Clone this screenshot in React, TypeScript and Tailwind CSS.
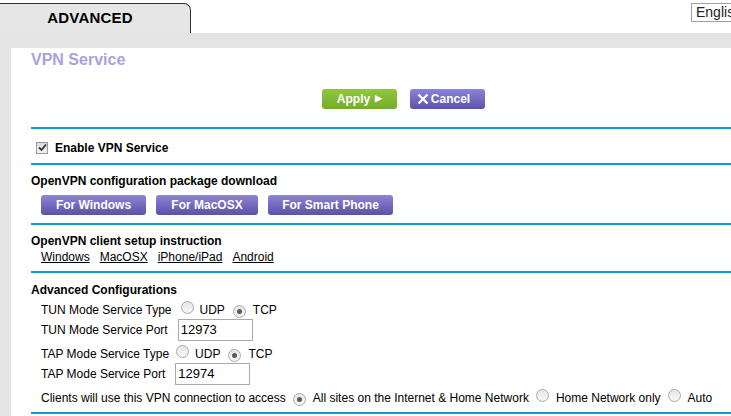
const Radio = ({ checked = false }: { checked?: boolean }) => (
  <span className="inline-flex items-center justify-center w-[13px] h-[13px] rounded-full border border-[#a9a9a9] bg-gradient-to-b from-[#e6e6e6] to-[#f7f7f7] shrink-0">
    {checked && <span className="w-[5px] h-[5px] rounded-full bg-[#5a5a5a]" />}
  </span>
);

const Line = () => <div className="h-[2px] bg-[#0d9ccf] w-full" />;

const PurpleButton = ({ label, width }: { label: string; width: string }) => (
  <button
    className={`h-[20px] rounded-[3px] bg-gradient-to-b from-[#8e84da] to-[#5b52a6] text-white font-bold text-[12px] leading-none ${width}`}
  >
    {label}
  </button>
);

export default function App() {
  return (
    <div className="w-[731px] h-[416px] overflow-hidden bg-white text-[12px] text-black font-['Liberation_Sans',Arial,sans-serif]">
      {/* Top: tab + language */}
      <div className="flex items-start h-[33px] pt-[3px]">
        <div className="w-[191px] h-[30px] bg-[#e6e6e6] border-t border-r border-[#333] rounded-tr-[7px] flex items-center justify-center pr-[10px]">
          <span className="font-bold text-[15px] tracking-[0.2px]">ADVANCED</span>
        </div>
        <div className="ml-auto mr-[-30px] h-[19px] w-[70px] border border-[#a0a0a0] px-[4px] flex items-center text-[14px] text-[#222]">
          English
        </div>
      </div>
      <div className="h-[15px] bg-[#e4e4e4]" />

      <div className="flex h-[368px]">
        <div className="w-[11px] bg-[#e4e4e4] shrink-0" />
        <div className="flex-1 pl-[20px] overflow-hidden">
          <div className="h-[20px] flex items-end">
            <h1 className="font-bold text-[16px] text-[#a9a3dc] leading-none">VPN Service</h1>
          </div>

          {/* Apply / Cancel */}
          <div className="flex pl-[291px] pt-[21px] gap-[13px]">
            <button className="w-[75px] h-[20px] rounded-[3px] bg-gradient-to-b from-[#91c73f] to-[#74ad2c] text-white font-bold text-[12px] flex items-center justify-center gap-[5px]">
              Apply
              <span className="text-[9px]">▶</span>
            </button>
            <button className="w-[75px] h-[20px] rounded-[3px] bg-gradient-to-b from-[#8c82da] to-[#5d54a8] text-white font-bold text-[12px] flex items-center justify-center gap-[2px] pr-[8px]">
              <svg width="12" height="12" viewBox="0 0 12 12">
                <path d="M1.5 1.5 L10.5 10.5 M10.5 1.5 L1.5 10.5" stroke="white" strokeWidth="2.2" />
              </svg>
              Cancel
            </button>
          </div>

          <div className="mt-[18px]">
            <Line />
          </div>

          {/* Enable */}
          <div className="h-[34px] pt-[3px] flex items-center pl-[5px] gap-[7px]">
            <span className="w-[12px] h-[12px] border border-[#9a9a9a] bg-gradient-to-b from-[#dcdcdc] to-[#f2f2f2] flex items-center justify-center">
              <svg width="9" height="9" viewBox="0 0 9 9">
                <path d="M1 4.5 L3.5 7 L8 1.5" stroke="#333" strokeWidth="1.8" fill="none" />
              </svg>
            </span>
            <span className="font-bold">Enable VPN Service</span>
          </div>
          <Line />

          {/* Download */}
          <div className="pt-[9px] font-bold leading-[14px]">OpenVPN configuration package download</div>
          <div className="flex gap-[10px] pl-[10px] mt-[7px]">
            <PurpleButton label="For Windows" width="w-[105px]" />
            <PurpleButton label="For MacOSX" width="w-[102px]" />
            <PurpleButton label="For Smart Phone" width="w-[125px]" />
          </div>
          <div className="mt-[8px]">
            <Line />
          </div>

          {/* Client setup */}
          <div className="pt-[9px] font-bold leading-[14px]">OpenVPN client setup instruction</div>
          <div className="flex gap-[10px] pl-[10px] leading-[16px] mt-[1px]">
            <span className="underline">Windows</span>
            <span className="underline">MacOSX</span>
            <span className="underline">iPhone/iPad</span>
            <span className="underline">Android</span>
          </div>
          <div className="mt-[6px]">
            <Line />
          </div>

          {/* Advanced */}
          <div className="pt-[10px] font-bold leading-[14px]">Advanced Configurations</div>
          <div className="pl-[10px]">
            <div className="flex items-center h-[20px] mt-[3px]">
              <span>TUN Mode Service Type</span>
              <span className="ml-[9px]"><Radio /></span>
              <span className="ml-[6px]">UDP</span>
              <span className="ml-[8px]"><Radio checked /></span>
              <span className="ml-[7px]">TCP</span>
            </div>
            <div className="flex items-center h-[20px]">
              <span>TUN Mode Service Port</span>
              <span className="ml-[10px] w-[75px] h-[22px] border border-[#a9a9a9] px-[2px] flex items-center text-[13px] shrink-0">12973</span>
            </div>
            <div className="flex items-center h-[20px] mt-[4px]">
              <span>TAP Mode Service Type</span>
              <span className="ml-[7px]"><Radio /></span>
              <span className="ml-[6px]">UDP</span>
              <span className="ml-[8px]"><Radio checked /></span>
              <span className="ml-[7px]">TCP</span>
            </div>
            <div className="flex items-center h-[20px]">
              <span>TAP Mode Service Port</span>
              <span className="ml-[10px] w-[75px] h-[22px] border border-[#a9a9a9] px-[2px] flex items-center text-[13px] shrink-0">12974</span>
            </div>
            <div className="flex items-center h-[20px] mt-[4px] whitespace-nowrap">
              <span>Clients will use this VPN connection to access</span>
              <span className="ml-[7px]"><Radio checked /></span>
              <span className="ml-[7px]">All sites on the Internet &amp; Home Network</span>
              <span className="ml-[7px]"><Radio /></span>
              <span className="ml-[7px]">Home Network only</span>
              <span className="ml-[7px]"><Radio /></span>
              <span className="ml-[7px]">Auto</span>
            </div>
          </div>
          <div className="mt-[4px]">
            <Line />
          </div>
        </div>
      </div>
    </div>
  );
}
